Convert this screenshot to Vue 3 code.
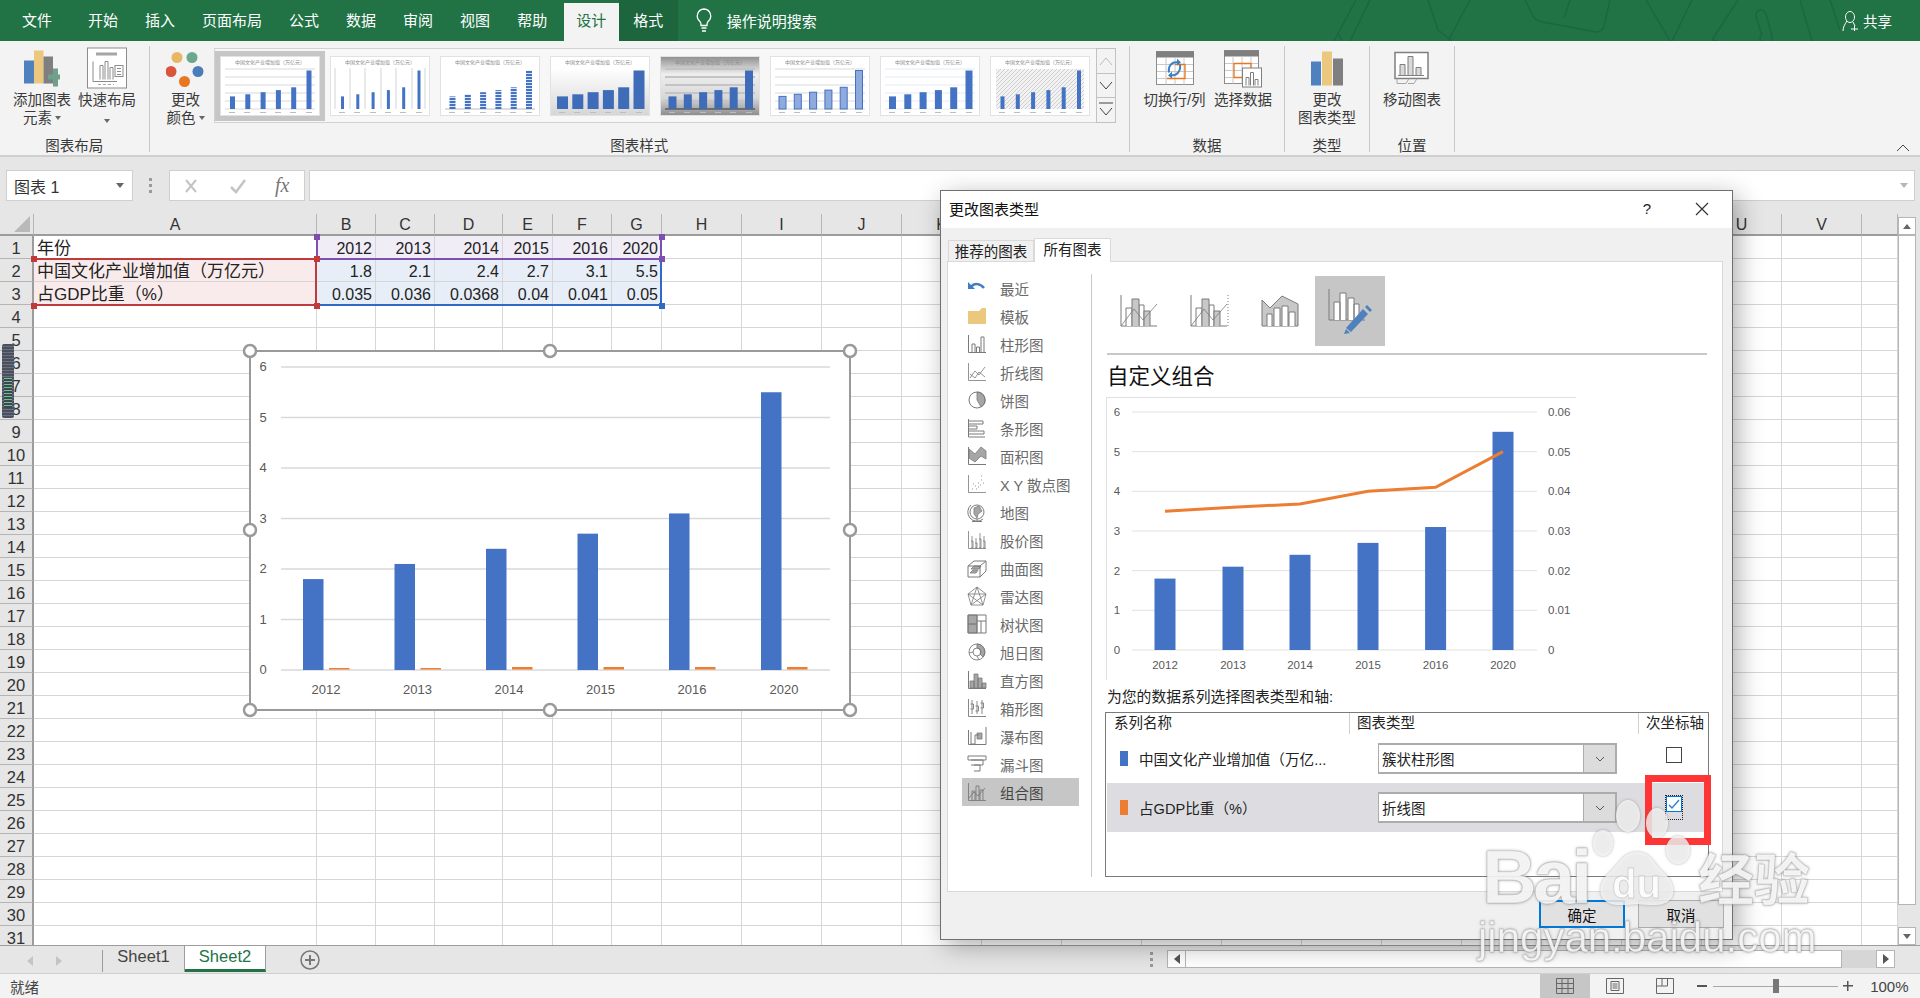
<template>
  <div class="app">
    <svg class="defs" width="0" height="0">
      <defs>
        <linearGradient id="g-soft" x1="0" y1="0" x2="0" y2="1"><stop offset="0.2" stop-color="#fff" /><stop offset="1" stop-color="#d6d6d6" /></linearGradient>
        <linearGradient id="g-dark" x1="0" y1="0" x2="0" y2="1"><stop offset="0" stop-color="#8f8f8f" /><stop offset="0.3" stop-color="#eee" /><stop offset="0.7" stop-color="#d8d8d8" /><stop offset="1" stop-color="#8c8c8c" /></linearGradient>
        <pattern id="p-stripe" width="4" height="3" patternUnits="userSpaceOnUse"><rect width="4" height="2" fill="#4472c4" /><rect y="2" width="4" height="1" fill="#dce6f5" /></pattern>
        <pattern id="p-hatch" width="4" height="4" patternUnits="userSpaceOnUse"><rect width="4" height="4" fill="#f2f2f2" /><path d="M0 4L4 0" stroke="#c6c6c6" stroke-width="0.8" /></pattern>
      </defs>
    </svg>

    <!-- 标题栏 -->
    <header class="menu">
      <svg class="menu-art" width="600" height="41" viewBox="0 0 600 41">
        <path d="M14 41L36 0M30 41L50 0M22 41l-4-8M108 0L118 30L132 41M150 0L128 41M205 0L212 14Q214 20 222 22L276 32Q282 32 284 26L290 0M250 0L244 18M326 0L350 41M372 0L352 41M392 40L418 0M398 41l-6-1M440 36a6 10 0 0 0 12 0l-6-22a5 5 0 0 0-10 2l6 20M480 0L492 41M510 0L520 30" />
      </svg>
      <div v-for="t in menuTabs" :key="t.label" class="menu-tab" :class="t.cls">{{ t.label }}</div>
      <div class="search">
        <svg width="18" height="28" viewBox="0 0 18 28"><path d="M9 2a7 7 0 0 0-4 12.500c1 1 1 3 1 4h6c0-1 0-3 1-4A7 7 0 0 0 9 2zM6.500 21h5M7 24h4" fill="none" stroke="#fff" stroke-width="1.300" /></svg>
        <span>操作说明搜索</span>
      </div>
      <div class="share">
        <svg width="18" height="22" viewBox="0 0 18 22"><path d="M8 1.500a4.500 5.500 0 1 0 .01 0zM5 11C3 14 1 17 1 21M11 12l2 4M9 19h7M12.500 16v5" fill="none" stroke="#fff" stroke-width="1" /></svg>
        <span>共享</span>
      </div>
    </header>

    <!-- 功能区 -->
    <section class="ribbon">
      <div class="group g-layout">
        <div class="group-body">
          <div class="big-btn w64">
            <svg class="big-icon" width="40" height="38" viewBox="0 0 40 38">
              <rect x="2" y="11" width="10" height="23" fill="#4e81bd" /><rect x="12" y="1" width="9.500" height="33" fill="#ecc77e" /><rect x="21.500" y="7" width="9.500" height="27" fill="#7f7f7f" />
              <path d="M26 25h5v-6h5v6h2v5h-2v7h-5v-7h-5z" fill="#6fa08c" />
            </svg>
            <div class="btn-text">添加图表<br /><span class="caret-line">元素<i class="caret"></i></span></div>
          </div>
          <div class="big-btn w62">
            <svg class="big-icon" width="42" height="42" viewBox="0 0 42 42">
              <rect x="1.500" y="0.500" width="39" height="40" fill="#fff" stroke="#8c8c8c" /><rect x="10" y="5" width="21" height="3" fill="#a6a6a6" />
              <path d="M7 14v20h24M14 32V18h3v14M19 32V14h3v18M24 32V20h3v12" fill="none" stroke="#8c8c8c" /><rect x="29" y="18" width="8" height="11" fill="#fff" stroke="#8c8c8c" /><path d="M31 21h4M31 24h4M31 27h4" stroke="#8c8c8c" /><path d="M12 37h16" stroke="#a6a6a6" stroke-dasharray="3 2" />
            </svg>
            <div class="btn-text">快速布局<br /><span class="caret-line"><i class="caret"></i></span></div>
          </div>
        </div>
        <div class="group-label">图表布局</div>
      </div>

      <div class="group g-style">
        <div class="group-body">
          <div class="big-btn w56">
            <svg class="big-icon" width="40" height="38" viewBox="0 0 40 38">
              <circle cx="11" cy="8" r="5.500" fill="#e8b763" /><circle cx="26" cy="8" r="5.500" fill="#6aa990" /><circle cx="5" cy="22" r="5.500" fill="#d9563a" /><circle cx="32" cy="22" r="5.500" fill="#4a7ebb" /><circle cx="18.500" cy="32" r="5.500" fill="#e87722" />
            </svg>
            <div class="btn-text">更改<br /><span class="caret-line">颜色<i class="caret"></i></span></div>
          </div>
          <div class="gallery">
            <div v-for="(t, i) in thumbs" :key="i" class="thumb" :class="{ picked: i === 0 }">
              <svg width="100" height="60" viewBox="0 0 100 60">
                <rect x="0.500" y="0.500" width="99" height="59" :fill="t.bg" stroke="#e2e2e2" />
                <text x="50" y="8" text-anchor="middle" class="thumb-title">中国文化产业增加值（万亿元）</text>
                <path v-if="t.hLines" :d="thumbGrid" fill="none" :stroke="t.hLines" :stroke-width="t.hw" />
                <path v-if="t.vLines" :d="thumbVGrid" fill="none" :stroke="t.vLines" stroke-width="1.200" />
                <rect v-if="t.pattern" x="6" y="13" width="88" height="40" :fill="t.pattern" />
                <rect v-if="t.base" x="5" y="52" width="90" height="2" :fill="t.base" />
                <rect v-for="(v, k) in values" :key="k" :x="12.500 + 15.300 * k - t.barW / 2" :y="53 - v * 7" :width="t.barW" :height="v * 7" :fill="t.fill" :stroke="t.stroke || 'none'" />
                <path d="M9 56.500h6M24 56.500h6M40 56.500h6M55 56.500h6M70 56.500h6M86 56.500h6" stroke="#bdbdbd" />
              </svg>
            </div>
          </div>
          <div class="gallery-scroll">
            <div class="gs-btn"><svg width="14" height="10" viewBox="0 0 14 10"><path d="M1 9l6-7 6 7" fill="none" stroke="#bbb" /></svg></div>
            <div class="gs-btn"><svg width="14" height="10" viewBox="0 0 14 10"><path d="M1 1l6 7 6-7" fill="none" stroke="#444" /></svg></div>
            <div class="gs-btn last"><svg width="14" height="16" viewBox="0 0 14 16"><path d="M0 1h14M1 6l6 7 6-7" fill="none" stroke="#444" /></svg></div>
          </div>
        </div>
        <div class="group-label">图表样式</div>
      </div>

      <div class="group g-data">
        <div class="group-body">
          <div class="big-btn w69">
            <svg class="big-icon" width="38" height="36" viewBox="0 0 38 36">
              <rect x="0.500" y="1" width="37" height="33" fill="#fff" stroke="#8c8c8c" /><rect x="0" y="1" width="38" height="6" fill="#7f7f7f" />
              <path d="M10 7v27M19 7v27M28 7v27M1 14h36M1 21h36M1 28h36" stroke="#c8c8c8" /><path d="M19 14h10v14H11" fill="none" stroke="#e87722" stroke-width="1.300" />
              <path d="M13 22c-1-7 3-11 9-10M24 14c1 7-3 11-9 11" fill="none" stroke="#3f7fc1" stroke-width="2" /><path d="M21 8l4 4-4 3zM16 21l-4 4 4 3z" fill="#3f7fc1" />
            </svg>
            <div class="btn-text">切换行/列</div>
          </div>
          <div class="big-btn w68">
            <svg class="big-icon" width="38" height="38" viewBox="0 0 38 38">
              <rect x="0.500" y="1" width="34" height="33" fill="#fff" stroke="#8c8c8c" /><rect x="0" y="1" width="35" height="6" fill="#7f7f7f" />
              <path d="M9 7v27M18 7v27M27 7v27M1 14h33M1 21h33M1 28h33" stroke="#c8c8c8" /><path d="M10 14h17v14H10z" fill="none" stroke="#e87722" stroke-width="1.300" />
              <rect x="18.500" y="18.500" width="19" height="19" fill="#fff" stroke="#7f7f7f" /><path d="M22 36V28h3v8M26.500 36V23h3v13M31 36V30h3v6" fill="none" stroke="#7f7f7f" />
            </svg>
            <div class="btn-text">选择数据</div>
          </div>
        </div>
        <div class="group-label">数据</div>
      </div>

      <div class="group g-type">
        <div class="group-body center">
          <div class="big-btn">
            <svg class="big-icon" width="32" height="36" viewBox="0 0 32 36">
              <rect x="0" y="11" width="10" height="24" fill="#4e81bd" /><rect x="11" y="1" width="10" height="34" fill="#ecc77e" /><rect x="22" y="8" width="10" height="27" fill="#7f7f7f" />
            </svg>
            <div class="btn-text">更改<br />图表类型</div>
          </div>
        </div>
        <div class="group-label">类型</div>
      </div>

      <div class="group g-pos">
        <div class="group-body center">
          <div class="big-btn">
            <svg class="big-icon" width="36" height="34" viewBox="0 0 36 34">
              <rect x="1" y="1" width="33" height="26" fill="#fff" stroke="#7f7f7f" stroke-width="1.500" /><path d="M6 24V13h5v11M14 24V5h5v19M22 24V16h5v8M4 24h26" fill="#d9d9d9" stroke="#7f7f7f" />
              <path d="M3 27v5h9l3-5M14 32h6l3-5" fill="none" stroke="#a6a6a6" />
            </svg>
            <div class="btn-text">移动图表</div>
          </div>
        </div>
        <div class="group-label">位置</div>
      </div>

      <svg class="collapse" width="14" height="8" viewBox="0 0 14 8"><path d="M1 7l6-6 6 6" fill="none" stroke="#444" /></svg>
    </section>

    <!-- 编辑栏 -->
    <div class="formula">
      <div class="name-box"><span>图表 1</span><i class="tri-down"></i></div>
      <div class="dots"></div>
      <div class="fx-box">
        <svg width="16" height="16" viewBox="0 0 16 16"><path d="M3 2l10 12M13 2L3 14" stroke="#c4c4c4" stroke-width="2" /></svg>
        <svg width="18" height="16" viewBox="0 0 18 16"><path d="M2 9l5 5 9-12" fill="none" stroke="#c4c4c4" stroke-width="2.500" /></svg>
        <span class="fx">fx</span>
      </div>
      <div class="fx-input"><i class="tri-down light"></i></div>
    </div>

    <!-- 表格 -->
    <div class="sheet">
      <div class="grid-wrap">
        <div class="grid">
          <div class="corner"><i></i></div>
          <div v-for="c in columns" :key="c" class="col-head">{{ c }}</div>
          <template v-for="r in 31" :key="r">
            <div class="row-head">{{ r }}</div>
            <div v-for="(c, i) in columns" :key="c" class="cell" :class="cellClass(r, i)">{{ cellText(r, i) }}</div>
          </template>
        </div>
        <div class="range range-red"></div>
        <div class="range range-purple"></div>
        <div class="range range-blue"></div>
        <i v-for="(h, i) in rangeHandles" :key="i" class="range-handle" :class="h.c" :style="{ left: h.x + 'px', top: h.y + 'px' }"></i>
      </div>
      <div class="v-scroll">
        <div class="vs-btn"><i class="tri-up"></i></div>
        <div class="vs-thumb"></div>
        <div class="vs-btn"><i class="tri-down"></i></div>
      </div>
    </div>

    <!-- 工作表标签 -->
    <div class="tabs">
      <div class="tab-nav">
        <i class="arrow-left"></i>
        <i class="arrow-right"></i>
      </div>
      <div class="sheet-tab">Sheet1</div>
      <div class="sheet-tab active">Sheet2</div>
      <svg class="add-sheet" width="20" height="20" viewBox="0 0 20 20"><circle cx="10" cy="10" r="9" fill="none" stroke="#777" stroke-width="1.500" /><path d="M5 10h10M10 5v10" stroke="#777" stroke-width="2" /></svg>
      <div class="dots tab-dots"></div>
      <div class="h-scroll">
        <div class="hs-btn"><i class="arrow-left dark"></i></div>
        <div class="hs-thumb"></div>
        <div class="hs-track"></div>
        <div class="hs-btn"><i class="arrow-right dark"></i></div>
      </div>
    </div>

    <!-- 状态栏 -->
    <footer class="status">
      <span class="ready">就绪</span>
      <div class="view-btn on">
        <svg width="18" height="16" viewBox="0 0 18 16"><path d="M.5.5h17v15H.5zM6 .5v15M12 .5v15M.5 5.500h17M.5 10.500h17" fill="none" stroke="#666" /></svg>
      </div>
      <div class="view-btn">
        <svg width="18" height="16" viewBox="0 0 18 16"><path d="M.5.5h17v15H.5zM5 3.500h8v9H5zM6.500 6h5M6.500 8h5M6.500 10h5" fill="none" stroke="#666" /></svg>
      </div>
      <div class="view-btn">
        <svg width="18" height="16" viewBox="0 0 18 16"><path d="M.5.5h17v15H.5zM.5 8h11V.5M6 .5V8" fill="none" stroke="#666" /></svg>
      </div>
      <div class="zoom-minus"></div>
      <div class="zoom-slider"><i></i></div>
      <div class="zoom-plus"></div>
      <span class="zoom-val">100%</span>
    </footer>

    <!-- 工作表上的图表 -->
    <svg class="main-chart" width="620" height="380" viewBox="0 0 620 380">
      <rect x="10" y="11" width="600" height="359" fill="#fff" stroke="#9a9a9a" stroke-width="2" />
      <g v-for="n in 7" :key="n">
        <path :d="`M41 ${mainY(n - 1)}H590`" stroke="#d9d9d9" stroke-width="1.500" />
        <text x="23" :y="mainY(n - 1) + 4" text-anchor="middle" class="chart-num big">{{ n - 1 }}</text>
      </g>
      <g v-for="(v, i) in values" :key="i">
        <rect :x="mainBarX[i]" :y="mainY(v)" width="20.500" :height="v * 50.500" fill="#4472c4" />
        <rect :x="mainBarX[i] + 26" :y="shares[i] > 0.036 ? 327 : 328" width="20.500" :height="shares[i] > 0.036 ? 2.500 : 1.500" fill="#ed7d31" />
        <text :x="mainBarX[i] + 23" y="354" text-anchor="middle" class="chart-num big">{{ years[i] }}</text>
      </g>
      <g v-for="(h, i) in chartHandles" :key="i">
        <circle :cx="h[0]" :cy="h[1]" r="6" fill="#fff" stroke="#9a9a9a" stroke-width="2.500" />
      </g>
    </svg>

    <div class="meter"><i></i></div>

    <!-- 对话框 -->
    <div class="dialog">
      <div class="dlg-title">
        <span class="dlg-name">更改图表类型</span>
        <span class="dlg-help">?</span>
        <svg width="14" height="14" viewBox="0 0 14 14"><path d="M1 1l12 12M13 1L1 13" stroke="#333" stroke-width="1.200" /></svg>
      </div>
      <div class="dlg-tabs">
        <div class="dlg-tab">推荐的图表</div>
        <div class="dlg-tab on">所有图表</div>
      </div>
      <div class="dlg-panel">
        <nav class="nav">
          <div v-for="n in chartTypes" :key="n.label" class="nav-item" :class="{ on: n.on }">
            <svg width="20" height="20" viewBox="0 0 20 20" class="nav-icon">
              <path v-if="n.fill" :d="n.fill" :fill="n.color || '#a6a6a6'" :stroke="n.color ? 'none' : '#7a7a7a'" stroke-width="0.800" />
              <path v-if="n.line" :d="n.line" fill="none" :stroke="n.color || '#7a7a7a'" :stroke-width="n.sw || 1" />
            </svg>
            <span>{{ n.label }}</span>
          </div>
        </nav>
        <div class="detail">
          <div class="subtypes">
            <div class="subtype">
              <svg width="40" height="34" viewBox="0 0 40 34"><path d="M1 1v31h36" fill="none" stroke="#7a7a7a" /><path d="M6 32V14h6v18M19 32V11h5v21" fill="#fff" stroke="#7a7a7a" /><path d="M12 32V5h7v27M24 32V17h6v15" fill="#c8c8c8" stroke="#7a7a7a" /><path d="M1 32l13-17 9 11 14-16" fill="none" stroke="#7a7a7a" stroke-width="0.800" /></svg>
            </div>
            <div class="subtype">
              <svg width="40" height="34" viewBox="0 0 40 34"><path d="M1 1v31h36" fill="none" stroke="#7a7a7a" /><path d="M6 32V14h6v18M19 32V11h5v21" fill="#fff" stroke="#7a7a7a" /><path d="M12 32V5h7v27M24 32V17h6v15" fill="#c8c8c8" stroke="#7a7a7a" /><path d="M1 32l13-17 9 11 14-16" fill="none" stroke="#7a7a7a" stroke-width="0.800" /><path d="M38 1v31" stroke="#7a7a7a" stroke-dasharray="1 2" /></svg>
            </div>
            <div class="subtype">
              <svg width="38" height="34" viewBox="0 0 38 34"><path d="M1 32V6l8 8L21 2l16 8v22z" fill="#c8c8c8" stroke="#7a7a7a" /><path d="M6 32V20h5v12M13 32V14h6v18M21 32V12h6v20M28 32V18h6v14" fill="#fff" stroke="#7a7a7a" /></svg>
            </div>
            <div class="subtype on">
              <svg width="44" height="46" viewBox="0 0 44 46"><path d="M1 1v31h36" fill="none" stroke="#7a7a7a" /><path d="M6 32V14h6v18M12 32V5h6v27M20 32V10h6v22M26 32V16h5v16" fill="#fff" stroke="#7a7a7a" /><path d="M18 40L35 21l5 5-17 18z" fill="#4e81bd" /><path d="M37 19l2-2 5 5-2 2zM18 41l4 4-6 1z" fill="#4e81bd" /></svg>
            </div>
          </div>
          <div class="detail-line"></div>
          <h2 class="detail-title">自定义组合</h2>
          <svg class="preview" width="469" height="282" viewBox="0 0 469 282">
            <g v-for="n in 7" :key="n">
              <path :d="`M25 ${prevY(n - 1)}H430`" stroke="#e1e1e1" />
              <text x="10" :y="prevY(n - 1) + 4" text-anchor="middle" class="chart-num">{{ n - 1 }}</text>
              <text x="441" :y="prevY(n - 1) + 4" class="chart-num">{{ n === 1 ? 0 : ((n - 1) / 100).toFixed(2) }}</text>
            </g>
            <g v-for="(v, i) in values" :key="i">
              <rect :x="prevX[i] - 10.500" :y="prevY(v)" width="21" :height="v * 39.670" fill="#4472c4" />
              <text :x="prevX[i]" y="271" text-anchor="middle" class="chart-num">{{ years[i] }}</text>
            </g>
            <polyline :points="prevLine" fill="none" stroke="#ed7d31" stroke-width="3" />
          </svg>
          <div class="series-hint">为您的数据系列选择图表类型和轴:</div>
          <div class="series">
            <div class="series-head">
              <span>系列名称</span>
              <span class="sep">图表类型</span>
              <span class="sep">次坐标轴</span>
            </div>
            <div v-for="s in series" :key="s.name" class="series-row" :class="{ on: s.on }">
              <div class="s-name"><i class="swatch" :class="s.cls"></i>{{ s.name }}</div>
              <div class="combo">
                <span>{{ s.type }}</span>
                <div class="combo-btn"><svg width="10" height="6" viewBox="0 0 10 6"><path d="M1 1l4 4 4-4" fill="none" stroke="#555" /></svg></div>
              </div>
              <div class="check-cell">
                <div class="check" :class="{ checked: s.on }">
                  <svg v-if="s.on" width="14" height="14" viewBox="0 0 14 14"><path d="M2 8l3 3 7-8" fill="none" stroke="#2b7cd3" stroke-width="1.300" /></svg>
                </div>
              </div>
            </div>
          </div>
        </div>
      </div>
      <div class="dlg-actions">
        <button class="dlg-btn primary">确定</button>
        <button class="dlg-btn">取消</button>
      </div>
    </div>

    <!-- 红框标注 -->
    <div class="red-mark"></div>

    <!-- 水印 -->
    <svg class="watermark" width="360" height="190" viewBox="0 0 360 190">
      <ellipse cx="168" cy="38" rx="12" ry="16" />
      <ellipse cx="197" cy="45" rx="11" ry="15" />
      <ellipse cx="143" cy="65" rx="10" ry="13" />
      <ellipse cx="218" cy="72" rx="12" ry="14" />
      <path d="M177 74c-14 0-18 12-27 20-8 7-12 16-8 25 5 9 17 9 35 7 18 2 30 2 35-7 4-9-1-18-9-25-9-8-12-20-26-20z" />
      <text x="22" y="125" class="wm-bai">Bai</text>
      <text x="152" y="120" class="wm-du">du</text>
      <text x="238" y="122" class="wm-cn">经验</text>
      <text x="18" y="174" class="wm-url">jingyan.baidu.com</text>
    </svg>
  </div>
</template>

<script setup>
const menuTabs = [
  { label: '文件', cls: 'first' },
  { label: '开始' },
  { label: '插入' },
  { label: '页面布局' },
  { label: '公式' },
  { label: '数据' },
  { label: '审阅' },
  { label: '视图' },
  { label: '帮助' },
  { label: '设计', cls: 'active' },
  { label: '格式', cls: 'context' },
]

const years = [2012, 2013, 2014, 2015, 2016, 2020]
const values = [1.8, 2.1, 2.4, 2.7, 3.1, 5.5]
const shares = [0.035, 0.036, 0.0368, 0.04, 0.041, 0.05]

const rows = {
  1: ['年份', ...years],
  2: ['中国文化产业增加值（万亿元）', ...values],
  3: ['占GDP比重（%）', ...shares],
}

const columns = 'ABCDEFGHIJKLMNOPQRSTUV'.split('').concat('')

const cellText = (r, i) => (rows[r] && rows[r][i] !== undefined ? rows[r][i] : '')

const cellClass = (r, i) => {
  if (!rows[r] || i > 6) return ''
  if (i === 0) return r === 1 ? 'label' : 'label pink'
  return r === 1 ? 'num lav' : 'num sky'
}

// 选区四角的小方块（相对表格区域）
const rangeHandles = [
  { x: 31, y: 42, c: 'red' },
  { x: 31, y: 89, c: 'red' },
  { x: 314, y: 42, c: 'red' },
  { x: 314, y: 89, c: 'red' },
  { x: 314, y: 20, c: 'purple' },
  { x: 659, y: 20, c: 'purple' },
  { x: 659, y: 42, c: 'purple' },
  { x: 659, y: 89, c: 'blue' },
]

// 缩略图样式
const thumbs = [
  { bg: '#fff', hLines: '#ececec', hw: 2, barW: 5, fill: '#4472c4' },
  { bg: '#fff', vLines: '#dcdcdc', barW: 3, fill: '#4472c4' },
  { bg: '#fff', barW: 6, fill: 'url(#p-stripe)', base: '#dcdcdc' },
  { bg: 'url(#g-soft)', barW: 11, fill: '#3f6cb8' },
  { bg: 'url(#g-dark)', hLines: '#c4c4c4', hw: 2, barW: 8, fill: '#3f6cb8', base: '#6e6e6e' },
  { bg: '#fff', hLines: '#ececec', hw: 2, barW: 7, fill: '#8faadc', stroke: '#4472c4' },
  { bg: '#fff', hLines: '#e4ecf6', hw: 1, barW: 7, fill: '#4472c4' },
  { bg: '#fff', pattern: 'url(#p-hatch)', barW: 4, fill: '#4472c4' },
]
const thumbGrid = [13, 21, 29, 37, 45, 53].map((y) => `M5 ${y}H95`).join('')
const thumbVGrid = [5, 20, 35, 51, 66, 82, 95].map((x) => `M${x} 12V53`).join('')

const axes = 'M1.500 1V18.500H19'

const chartTypes = [
  { label: '最近', line: 'M4 9C7 5 13 5 17 10', fill: 'M1 4V11H8Z', color: '#3f7fc1', sw: 2.5 },
  { label: '模板', fill: 'M1 5h11l3-3h4v16H1z', color: '#ecc77e' },
  { label: '柱形图', line: axes + 'M5 18V10h3v8M9.500 18V13h3v5M14 18V3h3v15' },
  { label: '折线图', line: axes + 'M3 16l5-7 4 4 6-8M3 12l5 4 4-6 6 5', sw: 0.8 },
  { label: '饼图', line: 'M2 10a8 8 0 1 0 16 0a8 8 0 1 0-16 0', fill: 'M10 10V2a8 8 0 0 1 4 15z' },
  { label: '条形图', line: 'M1.500 1V19H18M2 3h14v3H2M2 8h8v3H2M2 13h15v3H2' },
  { label: '面积图', line: axes, fill: 'M2 3l6 5 6-7 5 4v8l-5-3-6 6-6-4z' },
  { label: 'X Y 散点图', line: axes + 'M5 15h1M8 12h1M11 9h1M14 6h1M9 15h1M13 11h1M16 9h1M6 10h1M11 13h1M14 2h1', sw: 0.8 },
  { label: '地图', line: 'M3 10a7 7 0 1 0 14 0a7 7 0 1 0-14 0M4 3a9 9 0 0 0 12 14M10 17v2M5 19.500h10', fill: 'M7 6l5-2 3 5-4 3-1 4-3-4z' },
  { label: '股价图', line: axes + 'M5 6v12M9 8v10M13 3v15M17 6v12M4 11h2v7H4M8 13h2v5H8M12 9h2v9h-2M16 11h2v7h-2', sw: 0.8 },
  { label: '曲面图', line: 'M1 8l6-5h12v10l-6 6H1zM1 8h12v11M13 8l6-5', fill: 'M4 11l3-3h7l-2 3zM3 15l3-3h5l-2 3z' },
  { label: '雷达图', line: 'M10 1l9 7-3 11H4L1 8zM10 1l6 18M10 1L4 19M1 8l15 11M19 8L4 19M1 8h18', sw: 0.8 },
  { label: '树状图', fill: 'M1 1h9v9H1zM1 10h9v9H1z', line: 'M1 1h18v18H1zM10 1v18M10 7h9M14 7v12' },
  { label: '旭日图', fill: 'M10 2a8 8 0 0 1 6 13l-3-3a4 4 0 0 0-3-6z', line: 'M2 10a8 8 0 1 0 16 0a8 8 0 1 0-16 0M6 10a4 4 0 1 0 8 0a4 4 0 1 0-8 0M2 11l4-1M10 14l2 4', sw: 0.9 },
  { label: '直方图', line: axes, fill: 'M3 18V11h4v7zM7 18V4h4v14zM11 18V8h4v10zM15 18v-5h4v5z' },
  { label: '箱形图', line: axes + 'M5 2v14M3.500 6h3v5h-3M10 3v13M8.500 8h3v5h-3M15 2v14M13.500 5h3v5h-3', sw: 0.9 },
  { label: '瀑布图', line: 'M1.500 4V18.500H19V1M4 6v12h4V9h4', fill: 'M10 7h5v6h-5z' },
  { label: '漏斗图', line: 'M1 2h18v4H1M4 6h12v5H4M7 11h6v6H7M1 2v4' },
  { label: '组合图', line: axes + 'M5 18V9h3v9M9 18V4h3v14M13 18V8h3v10M2 16l5-6 4 4 7-8', sw: 0.9, on: true },
]

const series = [
  { name: '中国文化产业增加值（万亿...', type: '簇状柱形图', cls: 'blue' },
  { name: '占GDP比重（%）', type: '折线图', cls: 'orange', on: true },
]

const mainY = (v) => 330 - v * 50.5
const mainBarX = [63, 154.5, 246, 337.5, 429, 521]
const chartHandles = [
  [10, 11], [310, 11], [610, 11],
  [10, 190], [610, 190],
  [10, 370], [310, 370], [610, 370],
]

const prevY = (v) => 252 - v * 39.67
const prevX = [58, 126, 193, 261, 328.6, 396]
const prevLine = shares.map((s, i) => `${prevX[i]},${252 - (s / 0.06) * 238}`).join(' ')
</script>

<style>
html,
body {
  margin: 0;
  background: #fff;
}
</style>

<style scoped>
.app {
  position: relative;
  width: 1920px;
  height: 998px;
  overflow: hidden;
  display: flex;
  flex-direction: column;
  background: #fff;
  color: #333;
  font-family: "Liberation Sans", "Noto Sans CJK SC", sans-serif;
  font-size: 15px;
}
.defs {
  position: absolute;
}

/* 标题栏 */
.menu {
  position: relative;
  height: 41px;
  flex: none;
  display: flex;
  align-items: flex-end;
  padding-left: 8.5px;
  background: #217346;
  color: #fff;
}
.menu-art {
  position: absolute;
  left: 1320px;
  top: 0;
}
.menu-art path {
  fill: none;
  stroke: #1c6640;
  stroke-width: 1.5;
}
.menu-tab {
  height: 38px;
  line-height: 36px;
  padding: 0 13.5px;
  white-space: nowrap;
  position: relative;
}
.menu-tab.first {
  margin-right: 9px;
}
.menu-tab.active {
  margin-left: 3px;
  padding: 0 12.5px;
  background: #f3f3f3;
  color: #217346;
}
.menu-tab.context {
  height: 41px;
  line-height: 42px;
  padding: 0 14.5px;
  background: #1d653d;
}
.search {
  display: flex;
  align-items: center;
  gap: 14px;
  height: 41px;
  margin-left: 17px;
  position: relative;
}
.share {
  display: flex;
  align-items: center;
  gap: 3px;
  height: 41px;
  position: absolute;
  right: 28px;
  top: 0;
  font-size: 14.5px;
}

/* 功能区 */
.ribbon {
  height: 116px;
  flex: none;
  display: flex;
  padding-top: 5px;
  box-sizing: border-box;
  background: #f3f3f3;
  border-bottom: 2px solid #cfcfcf;
  position: relative;
  font-size: 14.5px;
  color: #3a3a3a;
}
.group {
  height: 106px;
  box-sizing: border-box;
  border-right: 1px solid #c9c9c9;
  display: flex;
  flex-direction: column;
  flex: none;
}
.g-layout {
  width: 149.5px;
  padding-left: 10px;
}
.g-style {
  width: 980.5px;
  padding-left: 8px;
}
.g-data {
  width: 155px;
  padding-left: 10px;
}
.g-type {
  width: 85px;
}
.g-pos {
  width: 85px;
}
.group-body {
  flex: 1;
  display: flex;
  min-height: 0;
}
.group-body.center {
  justify-content: center;
}
.group-label {
  height: 20px;
  line-height: 20px;
  margin-bottom: -4px;
  text-align: center;
  font-size: 14.5px;
  position: relative;
}
.g-layout .group-label,
.g-style .group-label,
.g-data .group-label {
  margin-left: -10px;
}
.g-style .group-label {
  margin-left: -8px;
}
.big-btn {
  display: flex;
  flex-direction: column;
  align-items: center;
  flex: none;
  height: 85px;
  white-space: nowrap;
}
.w56 { width: 56px; }
.w62 { width: 62px; margin-left: 2px; }
.w64 { width: 64px; }
.w69 { width: 69px; }
.w68 { width: 68px; }
.big-icon {
  height: 45px;
  flex: none;
}
.btn-text {
  line-height: 18px;
  text-align: center;
}
.caret-line {
  display: inline-flex;
  align-items: center;
  gap: 3px;
  min-height: 18px;
}
.caret {
  width: 0;
  height: 0;
  border: 3px solid transparent;
  border-top: 4px solid #666;
  border-bottom: 0;
}
.gallery {
  width: 882px;
  height: 75px;
  flex: none;
  margin-top: 2px;
  display: flex;
  box-sizing: border-box;
  padding: 2px 0 0 0;
  gap: 0;
  border: 1px solid #d2d2d2;
  border-right: 0;
  background: #f7f7f7;
}
.thumb {
  width: 110px;
  height: 70px;
  flex: none;
  display: flex;
  align-items: center;
  justify-content: center;
}
.thumb.picked {
  background: #c6c6c6;
}
.thumb-title {
  font-size: 5px;
  fill: #8a8a8a;
}
.gallery-scroll {
  width: 20px;
  height: 75px;
  margin-top: 2px;
  flex: none;
  display: flex;
  flex-direction: column;
  box-sizing: border-box;
  border: 1px solid #c2c2c2;
}
.gs-btn {
  flex: 1;
  display: flex;
  align-items: center;
  justify-content: center;
  border-bottom: 1px solid #c2c2c2;
}
.gs-btn.last {
  border-bottom: 0;
}
.collapse {
  position: absolute;
  right: 10px;
  bottom: 3px;
}

/* 编辑栏 */
.formula {
  height: 57px;
  flex: none;
  box-sizing: border-box;
  padding: 13px 5px 0 6px;
  display: flex;
  align-items: flex-start;
  background: #e6e6e6;
  position: relative;
}
.name-box {
  width: 127px;
  height: 31px;
  box-sizing: border-box;
  display: flex;
  align-items: center;
  justify-content: space-between;
  padding: 0 8px 0 7px;
  background: #fff;
  border: 1px solid #cfcfcf;
  font-size: 16px;
}
.dots {
  width: 3px;
  height: 15px;
  margin: 8px 17px 0 16px;
  background: repeating-linear-gradient(#9a9a9a 0 3px, transparent 3px 6px);
}
.fx-box {
  width: 136px;
  height: 31px;
  box-sizing: border-box;
  display: flex;
  align-items: center;
  gap: 30px;
  padding-left: 13px;
  background: #fff;
  border: 1px solid #cfcfcf;
}
.fx {
  font-family: "Liberation Serif", serif;
  font-style: italic;
  font-size: 20px;
  color: #777;
  margin-left: -2px;
}
.fx-input {
  flex: 1;
  height: 31px;
  margin-left: 4px;
  box-sizing: border-box;
  display: flex;
  align-items: center;
  justify-content: flex-end;
  padding-right: 6px;
  background: #fff;
  border: 1px solid #cfcfcf;
}
.tri-down {
  width: 0;
  height: 0;
  border: 4px solid transparent;
  border-top: 5px solid #666;
  border-bottom: 0;
}
.tri-down.light {
  border-top-color: #b5b5b5;
}
.tri-up {
  width: 0;
  height: 0;
  border: 4px solid transparent;
  border-bottom: 5px solid #666;
  border-top: 0;
}

/* 表格 */
.sheet {
  height: 731px;
  flex: none;
  display: flex;
  background: #e6e6e6;
}
.grid-wrap {
  position: relative;
  width: 1898px;
  height: 731px;
  flex: none;
  overflow: hidden;
}
.grid {
  display: grid;
  grid-template-columns: 34px 283px 59px 59px 68px 50px 59px 50px repeat(15, 80px) 36px;
  grid-template-rows: 22px repeat(31, 23px);
  background: #fff;
}
.corner {
  background: #e6e6e6;
  border-right: 1px solid #b5b5b5;
  border-bottom: 2px solid #9c9c9c;
  box-sizing: border-box;
  position: relative;
}
.corner i {
  position: absolute;
  right: 3px;
  bottom: 2px;
  width: 0;
  height: 0;
  border-left: 16px solid transparent;
  border-bottom: 16px solid #b9b9b9;
}
.col-head {
  background: #e6e6e6;
  border-right: 1px solid #b5b5b5;
  border-bottom: 2px solid #9c9c9c;
  box-sizing: border-box;
  padding-top: 2px;
  text-align: center;
  line-height: 18px;
  font-size: 16px;
  color: #333;
}
.row-head {
  background: #e6e6e6;
  border-right: 2px solid #9c9c9c;
  border-bottom: 1px solid #b5b5b5;
  box-sizing: border-box;
  padding-top: 3px;
  text-align: center;
  line-height: 19px;
  font-size: 16.5px;
  color: #333;
}
.cell {
  border-right: 1px solid #d6d6d6;
  border-bottom: 1px solid #d6d6d6;
  box-sizing: border-box;
  padding-top: 3px;
  line-height: 19px;
  white-space: nowrap;
}
.cell.label {
  padding-left: 3px;
  font-size: 17px;
  color: #222;
}
.cell.num {
  text-align: right;
  padding-right: 3px;
  font-size: 16px;
  color: #222;
}
.cell.pink {
  background: #f9ebeb;
}
.cell.lav {
  background: #f1edf7;
}
.cell.sky {
  background: #e7eef8;
}
.range {
  position: absolute;
  box-sizing: border-box;
  pointer-events: none;
}
.range-red {
  left: 34px;
  top: 44px;
  width: 283px;
  height: 48px;
  border: 2px solid #c0393b;
  border-left: 0;
}
.range-purple {
  left: 316px;
  top: 22px;
  width: 346px;
  height: 24px;
  border: 2px solid #7c4fb0;
  border-top: 0;
}
.range-blue {
  left: 317px;
  top: 46px;
  width: 345px;
  height: 46px;
  border: 2px solid #2f6bc4;
  border-top: 0;
  border-left: 0;
}
.range-handle {
  position: absolute;
  width: 6px;
  height: 6px;
}
.range-handle.red {
  background: #c0393b;
}
.range-handle.purple {
  background: #7c4fb0;
}
.range-handle.blue {
  background: #2f6bc4;
}
.v-scroll {
  width: 18px;
  margin-left: 0;
  flex: none;
  display: flex;
  flex-direction: column;
  padding-top: 3px;
}
.vs-btn {
  height: 18px;
  flex: none;
  background: #fff;
  border: 1px solid #b5b5b5;
  box-sizing: border-box;
  display: flex;
  align-items: center;
  justify-content: center;
}
.vs-thumb {
  height: 670px;
  flex: none;
  background: #fff;
  border: 1px solid #b5b5b5;
  box-sizing: border-box;
  margin-bottom: 22px;
}

/* 工作表标签 */
.tabs {
  height: 29px;
  flex: none;
  box-sizing: border-box;
  display: flex;
  align-items: flex-start;
  background: #e6e6e6;
  border-top: 1px solid #9c9c9c;
  border-bottom: 1px solid #cfcfcf;
}
.tab-nav {
  width: 103px;
  height: 22px;
  margin-top: 4px;
  box-sizing: border-box;
  display: flex;
  align-items: center;
  gap: 23px;
  padding-left: 27px;
  border-right: 1px solid #9c9c9c;
}
.arrow-left {
  width: 0;
  height: 0;
  border: 5px solid transparent;
  border-right: 6px solid #c4c4c4;
  border-left: 0;
}
.arrow-right {
  width: 0;
  height: 0;
  border: 5px solid transparent;
  border-left: 6px solid #c4c4c4;
  border-right: 0;
}
.arrow-left.dark {
  border-right-color: #555;
}
.arrow-right.dark {
  border-left-color: #555;
}
.sheet-tab {
  width: 82px;
  height: 26px;
  flex: none;
  box-sizing: border-box;
  text-align: center;
  line-height: 20px;
  font-size: 16.5px;
  color: #444;
  border-right: 1px solid #9c9c9c;
}
.sheet-tab.active {
  width: 81px;
  background: #fff;
  color: #217346;
  border-bottom: 3px solid #217346;
}
.add-sheet {
  margin: 4px 0 0 34px;
  flex: none;
}
.tab-dots {
  margin: 6px 14px 0 830px;
}
.h-scroll {
  width: 728px;
  height: 18px;
  margin: 4px 0 0 0;
  flex: none;
  display: flex;
}
.hs-btn {
  width: 19px;
  flex: none;
  background: #fff;
  border: 1px solid #b5b5b5;
  box-sizing: border-box;
  display: flex;
  align-items: center;
  justify-content: center;
}
.hs-thumb {
  flex: 1;
  background: #fff;
  border: 1px solid #b5b5b5;
  border-left: 0;
}
.hs-track {
  width: 34px;
  flex: none;
  background: #d6d6d6;
}

/* 状态栏 */
.status {
  height: 24px;
  flex: none;
  display: flex;
  align-items: center;
  background: #f3f3f3;
  font-size: 14.5px;
  color: #444;
}
.ready {
  margin-left: 10px;
  margin-right: auto;
}
.view-btn {
  width: 50px;
  height: 24px;
  flex: none;
  display: flex;
  align-items: center;
  justify-content: center;
}
.view-btn.on {
  background: #c6c6c6;
}
.zoom-minus {
  width: 10px;
  height: 1.5px;
  margin-left: 7px;
  background: #555;
}
.zoom-slider {
  position: relative;
  width: 125px;
  height: 1px;
  margin-left: 6px;
  background: #a8a8a8;
}
.zoom-slider i {
  position: absolute;
  left: 60px;
  top: -7px;
  width: 6px;
  height: 14px;
  background: #777;
}
.zoom-plus {
  width: 10px;
  height: 10px;
  margin-left: 5px;
  background: linear-gradient(#555, #555) center / 10px 1.5px no-repeat, linear-gradient(#555, #555) center / 1.5px 10px no-repeat;
}
.zoom-val {
  margin: 0 11.500px 0 17px;
  font-size: 15px;
}

/* 图表 */
.main-chart {
  position: absolute;
  left: 240px;
  top: 340px;
}
.chart-num {
  font-size: 11.5px;
  fill: #595959;
}
.chart-num.big {
  font-size: 13px;
}
.meter {
  position: absolute;
  left: 2px;
  top: 344px;
  width: 12px;
  height: 74px;
  border-radius: 2px;
  background: repeating-linear-gradient(#4a505c 0 2px, #6b7180 2px 3px);
}
.meter i {
  position: absolute;
  left: 2px;
  right: 2px;
  bottom: 10px;
  height: 30px;
  background: repeating-linear-gradient(#6fbf8f 0 1px, #3e4652 1px 3px);
}

/* 对话框 */
.dialog {
  position: absolute;
  left: 940px;
  top: 190px;
  width: 793px;
  height: 750px;
  box-sizing: border-box;
  display: flex;
  flex-direction: column;
  background: #f0f0f0;
  border: 1px solid #6f6f6f;
  box-shadow: 5px 6px 24px rgba(0, 0, 0, 0.32);
  color: #222;
}
.dlg-title {
  height: 37px;
  flex: none;
  box-sizing: border-box;
  display: flex;
  align-items: center;
  padding: 0 23px 2px 8px;
  background: #fff;
}
.dlg-name {
  color: #111;
  margin-right: auto;
}
.dlg-help {
  margin-right: 44px;
  font-size: 15px;
}
.dlg-tabs {
  height: 33px;
  flex: none;
  display: flex;
  align-items: flex-end;
  padding-left: 7px;
  position: relative;
  z-index: 1;
}
.dlg-tab {
  width: 86px;
  height: 21px;
  box-sizing: border-box;
  text-align: center;
  line-height: 22px;
  font-size: 14.5px;
  white-space: nowrap;
  border: 1px solid #d9d9d9;
  border-bottom: 0;
}
.dlg-tab.on {
  width: 77px;
  height: 24px;
  margin-bottom: -1px;
  background: #fff;
  line-height: 22px;
}
.dlg-panel {
  width: 776px;
  height: 631px;
  flex: none;
  margin-left: 6px;
  box-sizing: border-box;
  display: flex;
  align-items: flex-start;
  padding: 14px 0 0 14px;
  background: #fff;
  border: 1px solid #d9d9d9;
}
.nav {
  width: 130px;
  height: 603px;
  margin-top: -2px;
  flex: none;
  box-sizing: border-box;
  border-right: 1px solid #c8c8c8;
  font-size: 14.5px;
  color: #6a6a6a;
}
.nav-item {
  width: 117px;
  height: 28px;
  display: flex;
  align-items: center;
  gap: 13px;
  box-sizing: border-box;
  padding-left: 5px;
  white-space: nowrap;
}
.nav-item.on {
  background: #c6c6c6;
  color: #444;
}
.nav-icon {
  flex: none;
}
.detail {
  margin-left: 15px;
  width: 600px;
  flex: none;
  display: flex;
  flex-direction: column;
}
.subtypes {
  display: flex;
  height: 70px;
  margin-left: -2px;
}
.subtype {
  width: 70px;
  height: 70px;
  display: flex;
  align-items: center;
  justify-content: center;
}
.subtype.on {
  background: #c6c6c6;
}
.detail-line {
  height: 2px;
  margin-top: 7px;
  background: #c8c8c8;
}
.detail-title {
  height: 30px;
  line-height: 30px;
  margin: 7px 0 0;
  font-size: 21.5px;
  font-weight: 400;
  color: #111;
}
.preview {
  display: block;
  margin: 5px 0 0 -1px;
  border-top: 1px solid #e0e0e0;
  border-left: 1px solid #e0e0e0;
}
.series-hint {
  height: 20px;
  line-height: 20px;
  margin-top: 7px;
  font-size: 14.8px;
  white-space: nowrap;
}
.series {
  width: 604px;
  height: 165px;
  margin: 5px 0 0 -2px;
  box-sizing: border-box;
  border: 1px solid #7a7a7a;
}
.series-head {
  height: 21px;
  display: grid;
  grid-template-columns: 243px 289px 70px;
  line-height: 21px;
  font-size: 14.5px;
  white-space: nowrap;
}
.series-head span {
  padding-left: 8px;
}
.series-head .sep {
  border-left: 1px solid #d0d0d0;
  padding-left: 7px;
}
.series-row {
  height: 49px;
  display: grid;
  grid-template-columns: 243px 289px 70px;
  align-items: center;
  margin-left: 1px;
}
.series-row.on {
  background: #dddde1;
}
.s-name {
  display: flex;
  align-items: center;
  gap: 11px;
  padding-left: 13px;
  font-size: 14.6px;
  white-space: nowrap;
}
.swatch {
  width: 8px;
  height: 15px;
  flex: none;
}
.swatch.blue {
  background: #4472c4;
}
.swatch.orange {
  background: #ed7d31;
}
.combo {
  width: 239px;
  height: 31px;
  margin-left: 28px;
  box-sizing: border-box;
  display: flex;
  align-items: center;
  background: #fff;
  border: 2px solid #acacac;
  border-left-width: 1px;
  font-size: 14.5px;
}
.combo span {
  flex: 1;
  padding-left: 3px;
}
.combo-btn {
  width: 31px;
  height: 100%;
  flex: none;
  display: flex;
  align-items: center;
  justify-content: center;
  background: #dcdcdc;
  border-left: 1px solid #acacac;
}
.check-cell {
  padding-left: 27px;
  margin-bottom: 7px;
  height: 16px;
}
.check {
  position: relative;
  width: 16px;
  height: 16px;
  box-sizing: border-box;
  background: #fff;
  border: 1px solid #444;
}
.check.checked {
  border-color: #0078d7;
  display: flex;
  align-items: center;
  justify-content: center;
}
.check.checked::after {
  content: "";
  position: absolute;
  left: -2px;
  top: -2px;
  width: 18px;
  height: 25px;
  border: 1px dotted #222;
  box-sizing: border-box;
}
.dlg-actions {
  display: flex;
  justify-content: flex-end;
  gap: 13px;
  margin-top: 8px;
  padding-right: 8px;
}
.dlg-btn {
  width: 86px;
  height: 28px;
  padding: 0;
  box-sizing: border-box;
  background: #e1e1e1;
  border: 1px solid #adadad;
  font-family: inherit;
  font-size: 14.5px;
  color: #111;
}
.dlg-btn.primary {
  border: 2px solid #0078d7;
}

/* 标注 */
.red-mark {
  position: absolute;
  left: 1645px;
  top: 775px;
  width: 66px;
  height: 70px;
  box-sizing: border-box;
  border: 7px solid #ff3535;
}

/* 水印 */
.watermark {
  position: absolute;
  left: 1460px;
  top: 778px;
  filter: drop-shadow(0 0 1.5px rgba(90, 90, 90, 0.6));
}
.watermark ellipse,
.watermark path {
  fill: rgba(255, 255, 255, 0.75);
}
.watermark text {
  fill: rgba(255, 255, 255, 0.85);
  stroke: rgba(130, 130, 130, 0.3);
  stroke-width: 0.8px;
}
.wm-bai {
  font-family: "Liberation Sans", sans-serif;
  font-weight: 700;
  font-size: 76px;
  letter-spacing: -4px;
}
.wm-du {
  font-family: "Liberation Sans", sans-serif;
  font-weight: 700;
  font-size: 40px;
}
.wm-cn {
  font-family: "Noto Sans CJK SC", sans-serif;
  font-weight: 700;
  font-size: 56px;
}
.wm-url {
  font-family: "Liberation Sans", sans-serif;
  font-size: 42px;
}
</style>
